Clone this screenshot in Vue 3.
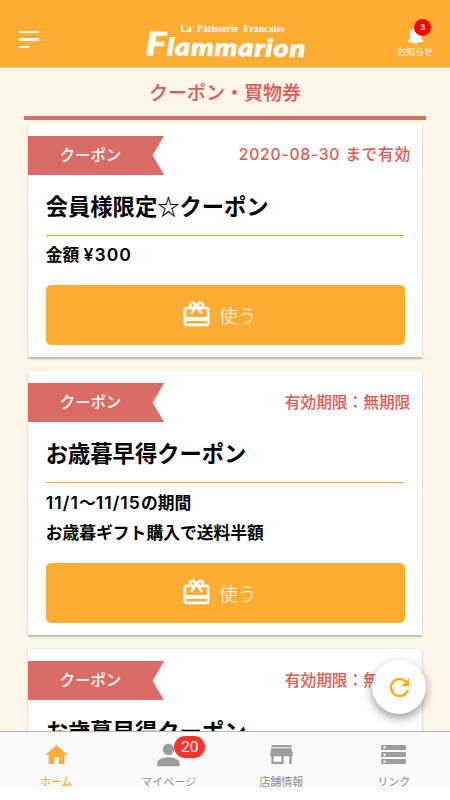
<script setup>
const coupons = [
  { id: 1, title: '会員様限定☆クーポン', limit: '2020-08-30 まで有効', dated: true, lines: ['金額 ¥300'] },
  { id: 2, title: 'お歳暮早得クーポン', limit: '有効期限：無期限', lines: ['11/1〜11/15の期間', 'お歳暮ギフト購入で送料半額'] },
  { id: 3, title: 'お歳暮早得クーポン', limit: '有効期限：無期限', lines: ['11/1〜11/15の期間', 'お歳暮ギフト購入で送料半額'] },
]
const splitDigits = (line) => line.split(/([¥\d/]+)/).filter(Boolean)
const tabs = [
  { label: 'ホーム', path: 'M10 20v-6h4v6h5v-8h3L12 3 2 12h3v8z', active: true },
  { label: 'マイページ', path: 'M12 12c2.75 0 5-2.25 5-5s-2.25-5-5-5-5 2.25-5 5 2.25 5 5 5zm0 2c-4 0-10 1.8-10 5.2V22h20v-2.8C22 15.8 16 14 12 14z', badge: 20 },
  { label: '店舗情報', path: 'M21 3H3v2h18V3zm1 10v-2l-1-5H3l-1 5v2h1v7h11v-7h5v7h2v-7h1zm-10 5H5v-5h7v5z' },
  { label: 'リンク', path: 'M1 20h22v-4.5H1V20zm2-3.2h2v2H3v-2zM1 3v4.5h22V3H1zm4 3.2H3v-2h2v2zm-4 7.6h22V9.300H1v4.500zm2-3.200h2v2H3v-2z' },
]
</script>

<template>
  <div class="app">
    <header class="header">
      <button class="menu" aria-label="メニュー"><i></i><i></i><i class="short"></i></button>
      <div class="logo">
        <div class="tagline">La Pâtisserie Francaise</div>
        <div class="brand"><span>F</span>lammarion</div>
      </div>
      <div class="notice">
        <svg class="bell" viewBox="4 2.5 16 19.5"><path d="M12 22c1.1 0 2-.9 2-2h-4c0 1.1.9 2 2 2zm6-6v-5c0-3.07-1.63-5.64-4.5-6.32V4c0-.83-.67-1.5-1.5-1.5s-1.5.67-1.5 1.5v.68C7.64 5.36 6 7.92 6 11v5l-2 2v2h16V18l-2-2z" /></svg>
        <span class="dot">3</span>
        <span class="notice-label">お知らせ</span>
      </div>
    </header>

    <main class="content">
      <h1>クーポン・買物券</h1>
      <section v-for="c in coupons" :key="c.id" class="card">
        <div class="top">
          <div class="ribbon">クーポン</div>
          <div class="limit" :class="{ dated: c.dated }">{{ c.limit }}</div>
        </div>
        <h2>{{ c.title }}</h2>
        <div class="rule"></div>
        <div class="details">
          <p v-for="line in c.lines" :key="line"><span v-for="(part, i) in splitDigits(line)" :key="i" :class="{ num: /\d/.test(part) }">{{ part }}</span></p>
        </div>
        <button class="use">
          <svg viewBox="0 0 24 24"><path d="M20 6h-2.18c.11-.31.18-.65.18-1 0-1.66-1.34-3-3-3-1.05 0-1.96.54-2.5 1.35l-.5.67-.5-.68C10.96 2.54 10.05 2 9 2 7.34 2 6 3.34 6 5c0 .35.07.69.18 1H4c-1.11 0-1.99.89-1.99 2L2 19c0 1.11.89 2 2 2h16c1.11 0 2-.89 2-2V8c0-1.11-.89-2-2-2zm-5-2c.55 0 1 .45 1 1s-.45 1-1 1-1-.45-1-1 .45-1 1-1zM9 4c.55 0 1 .45 1 1s-.45 1-1 1-1-.45-1-1 .45-1 1-1zm11 15H4v-2h16v2zm0-5H4V8h5.08L7 10.83 8.62 12 11 8.76l1-1.36 1 1.36L15.38 12 17 10.83 14.92 8H20v6z" /></svg>
          <span>使う</span>
        </button>
      </section>
    </main>

    <button class="refresh" aria-label="更新">
      <svg viewBox="0 0 24 24"><path d="M17.65 6.35C16.2 4.9 14.21 4 12 4c-4.42 0-7.99 3.58-7.99 8s3.57 8 7.99 8c3.73 0 6.84-2.55 7.73-6h-2.08c-.82 2.33-3.04 4-5.65 4-3.31 0-6-2.69-6-6s2.69-6 6-6c1.66 0 3.14.69 4.22 1.78L13 11h7V4l-2.35 2.35z" /></svg>
    </button>

    <nav class="tabs">
      <div v-for="t in tabs" :key="t.label" class="tab" :class="{ active: t.active }">
        <div class="tab-icon">
          <svg viewBox="0 0 24 24"><path fill-rule="evenodd" :d="t.path" /></svg>
          <b v-if="t.badge">{{ t.badge }}</b>
        </div>
        <span>{{ t.label }}</span>
      </div>
    </nav>
  </div>
</template>

<style>
body { margin: 0; overflow: hidden; background: #fff; }
</style>

<style scoped>
* { box-sizing: border-box; }
.app {
  position: relative;
  display: flex;
  flex-direction: column;
  width: 450px;
  height: 800px;
  padding-bottom: 10px;
  overflow: hidden;
  background: #fff;
  color: #000;
  font-family: Inter, "Noto Sans CJK JP", sans-serif;
}
button { border: 0; padding: 0; font-family: inherit; }
.header {
  flex: none;
  display: flex;
  justify-content: space-between;
  height: 68px;
  padding: 0 16px 0 19px;
  background: #ffad33;
  border-bottom: 1px solid #d8cda6;
  color: #fff;
}
.menu { width: 40px; padding-top: 31px; display: flex; flex-direction: column; gap: 5px; background: none; justify-content: flex-start; }
.menu i { width: 20px; height: 2.3px; background: #fff; }
.menu .short { width: 10px; }
.logo { width: 164px; padding: 25px 0 0; }
.tagline {
  padding-left: 35px;
  font: bold 9.4px/9px "Liberation Serif", serif;
  word-spacing: 2.5px;
  letter-spacing: 0.27px;
  white-space: nowrap;
}
.brand {
  display: flex;
  align-items: baseline;
  margin-top: -3px;
  height: 24px;
  font: italic 900 24px/24px Lato, sans-serif;
  letter-spacing: 0.8px;
  -webkit-text-stroke: 0.8px #fff;
  white-space: nowrap;
  transform: scaleX(1.19) rotate(0.8deg);
  transform-origin: left center;
}
.brand span { font-size: 32px; }
.notice { position: relative; width: 38px; padding-top: 26px; display: flex; flex-direction: column; align-items: center; }
.bell { width: 17px; height: 18px; fill: #fff; }
.dot {
  position: absolute;
  left: 18px;
  top: 19px;
  width: 17px;
  height: 17px;
  border-radius: 50%;
  background: #f00;
  font: bold 8px/17px Inter, sans-serif;
  text-align: center;
}
.notice-label { margin-top: 1px; font-size: 9.2px; line-height: 13px; white-space: nowrap; }
.content { flex: 1; min-height: 0; overflow: hidden; padding: 0 24px; background: #fff6ea; }
h1 {
  margin: 0 0 3.5px;
  height: 52px;
  border-bottom: 4px solid #dd6c65;
  color: #db5f59;
  font-size: 19px;
  line-height: 51px;
  font-weight: 500;
  text-align: center;
  -webkit-text-stroke: 0.2px #db5f59;
}
.card {
  margin: 0 3.7px 14.1px;
  padding: 12px 0 12px;
  background: #fff;
  border-radius: 1px;
  box-shadow: 0 1.5px 2px rgba(0, 0, 0, 0.24), 0 1px 3px rgba(0, 0, 0, 0.06);
}
.top { display: flex; justify-content: space-between; align-items: center; height: 39.4px; padding-right: 12px; }
.ribbon {
  width: 136.5px;
  height: 39.4px;
  padding-left: 32px;
  background: #db6c65;
  clip-path: polygon(0 0, 100% 0, 91.5% 50%, 100% 100%, 0 100%);
  color: #fff;
  font-size: 15.4px;
  line-height: 40px;
  font-weight: 500;
}
.limit { color: #db5f59; font-size: 15.7px; line-height: 40px; font-weight: 500; white-space: nowrap; -webkit-text-stroke: 0.12px #db5f59; }
.limit.dated { letter-spacing: 0.75px; margin-right: -0.6px; }
h2 {
  margin: 0 18px;
  height: 60px;
  font-family: "Noto Sans CJK JP", sans-serif;
  font-size: 22.3px;
  line-height: 60px;
  font-weight: 600;
}
.rule { height: 1px; margin: 0 18px; background: #f9a11f; }
.details { margin: 0 18px; padding: 4.4px 0 14px; }
p { margin: 0; font-size: 16.8px; line-height: 30.6px; font-weight: 600; }
.num { font-size: 17.6px; letter-spacing: 1.05px; line-height: 1; }
.use {
  display: flex;
  align-items: center;
  justify-content: center;
  gap: 7px;
  width: 359px;
  height: 60px;
  margin: 0 18px;
  padding: 0 13px 1px 0;
  border-radius: 5px;
  background: #ffad33;
  color: #fff;
  font-size: 18.6px;
  font-weight: 300;
}
.use svg { width: 31px; height: 31px; fill: #fff; }
.refresh {
  position: absolute;
  left: 372px;
  top: 660px;
  display: grid;
  place-items: center;
  width: 54px;
  height: 54px;
  border-radius: 50%;
  background: #fff;
  box-shadow: 0 4px 10px rgba(0, 0, 0, 0.4);
}
.refresh svg { width: 29px; height: 29px; fill: #ffad1c; }
.tabs { flex: none; display: grid; grid-template-columns: repeat(4, 1fr); height: 59px; background: #fafafa; border-top: 1px solid #b3b3b3; }
.tab { display: flex; flex-direction: column; align-items: center; padding-top: 9px; color: #8e8e8e; font-size: 11px; line-height: 16px; }
.tab-icon { position: relative; height: 28px; margin-bottom: 5px; }
.tab svg { width: 27px; height: 28px; fill: #9d9d9d; }
.tab b {
  position: absolute;
  left: 19px;
  top: -5px;
  width: 31px;
  height: 22px;
  border-radius: 11px;
  background: #fb3328;
  color: #fff;
  font: 400 15.5px/22px Roboto, sans-serif;
  text-align: center;
}
.tab.active { color: #ffad33; font-weight: 500; }
.tab.active svg { fill: #ffad33; }
</style>
